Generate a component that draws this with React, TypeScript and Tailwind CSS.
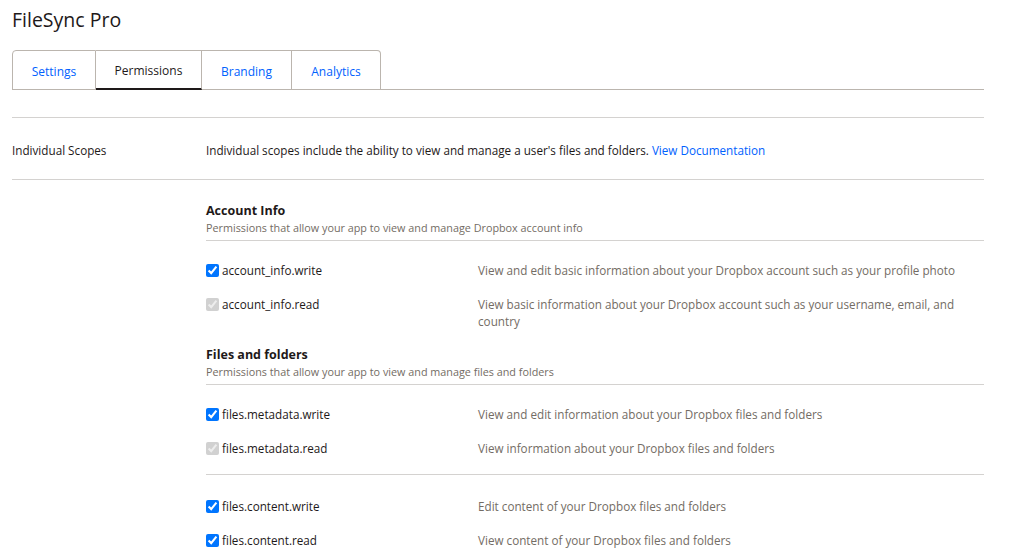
import React from "react";

const Row = ({ name, desc, disabled }: { name: string; desc: React.ReactNode; disabled?: boolean }) => (
  <div className="flex items-start pt-[8px] pb-[9px]">
    <label className="flex items-start w-[272px] shrink-0">
      <input type="checkbox" checked readOnly disabled={disabled} className="w-[13px] h-[13px] m-0 mt-[2px] mr-[3px] shrink-0" />
      <span className="text-[#1e1919]">{name}</span>
    </label>
    <div className="text-[#736c64] w-[490px]">{desc}</div>
  </div>
);

const Section = ({ title, sub }: { title: string; sub: string }) => (
  <div className="border-b border-[#d4d2d0] pb-[5px] mb-[13px]">
    <div className="font-bold text-[12.5px] text-[#1e1919] leading-[18px]">{title}</div>
    <div className="text-[10.8px] text-[#736c64] leading-[15px]">{sub}</div>
  </div>
);

export default function App() {
  return (
    <div className="w-[1010px] h-[555px] bg-white overflow-hidden text-[11.7px] leading-[17px] text-[#1e1919]" style={{ fontFamily: '"Open Sans", sans-serif' }}>
      <div className="pl-[12px] w-[984px]">
        <h1 className="text-[19.5px] leading-[28px] pt-[6px] text-[#1e1919]">FileSync Pro</h1>
        <div className="flex mt-[16px] border-b border-[#bbb5ae]">
          {[
            { t: "Settings", w: "w-[84px]" },
            { t: "Permissions", w: "w-[106px]" },
            { t: "Branding", w: "w-[90px]" },
            { t: "Analytics", w: "w-[89px]" },
          ].map((tab, i) => (
            <div
              key={tab.t}
              className={`${tab.w} h-[40px] -mb-px pt-[2px] flex items-center justify-center border-t border-[#bbb5ae] border-r ${i === 0 ? "border-l rounded-tl-[4px]" : ""} ${i === 3 ? "rounded-tr-[4px]" : ""} ${i === 1 ? "text-[#1e1919] border-b-2 border-b-[#1e1919]" : "text-[#0061fe] border-b border-b-[#bbb5ae]"} text-[12px]`}
            >
              {tab.t}
            </div>
          ))}
        </div>
        <div className="mt-[27px] border-t border-b border-[#d4d2d0] flex items-center h-[63px] pt-[3px]">
          <div className="w-[194px] shrink-0">Individual Scopes</div>
          <div>
            Individual scopes include the ability to view and manage a user's files and folders.{" "}
            <span className="text-[#0061fe]">View Documentation</span>
          </div>
        </div>
        <div className="pl-[194px] pt-[22px]">
          <Section title="Account Info" sub="Permissions that allow your app to view and manage Dropbox account info" />
          <Row name="account_info.write" desc="View and edit basic information about your Dropbox account such as your profile photo" />
          <Row name="account_info.read" disabled desc="View basic information about your Dropbox account such as your username, email, and country" />
          <div className="pt-[7px]">
            <Section title="Files and folders" sub="Permissions that allow your app to view and manage files and folders" />
          </div>
          <Row name="files.metadata.write" desc="View and edit information about your Dropbox files and folders" />
          <Row name="files.metadata.read" disabled desc="View information about your Dropbox files and folders" />
          <div className="border-t border-[#d4d2d0] mt-[8px] mb-[15px]" />
          <Row name="files.content.write" desc="Edit content of your Dropbox files and folders" />
          <Row name="files.content.read" desc="View content of your Dropbox files and folders" />
        </div>
      </div>
    </div>
  );
}
